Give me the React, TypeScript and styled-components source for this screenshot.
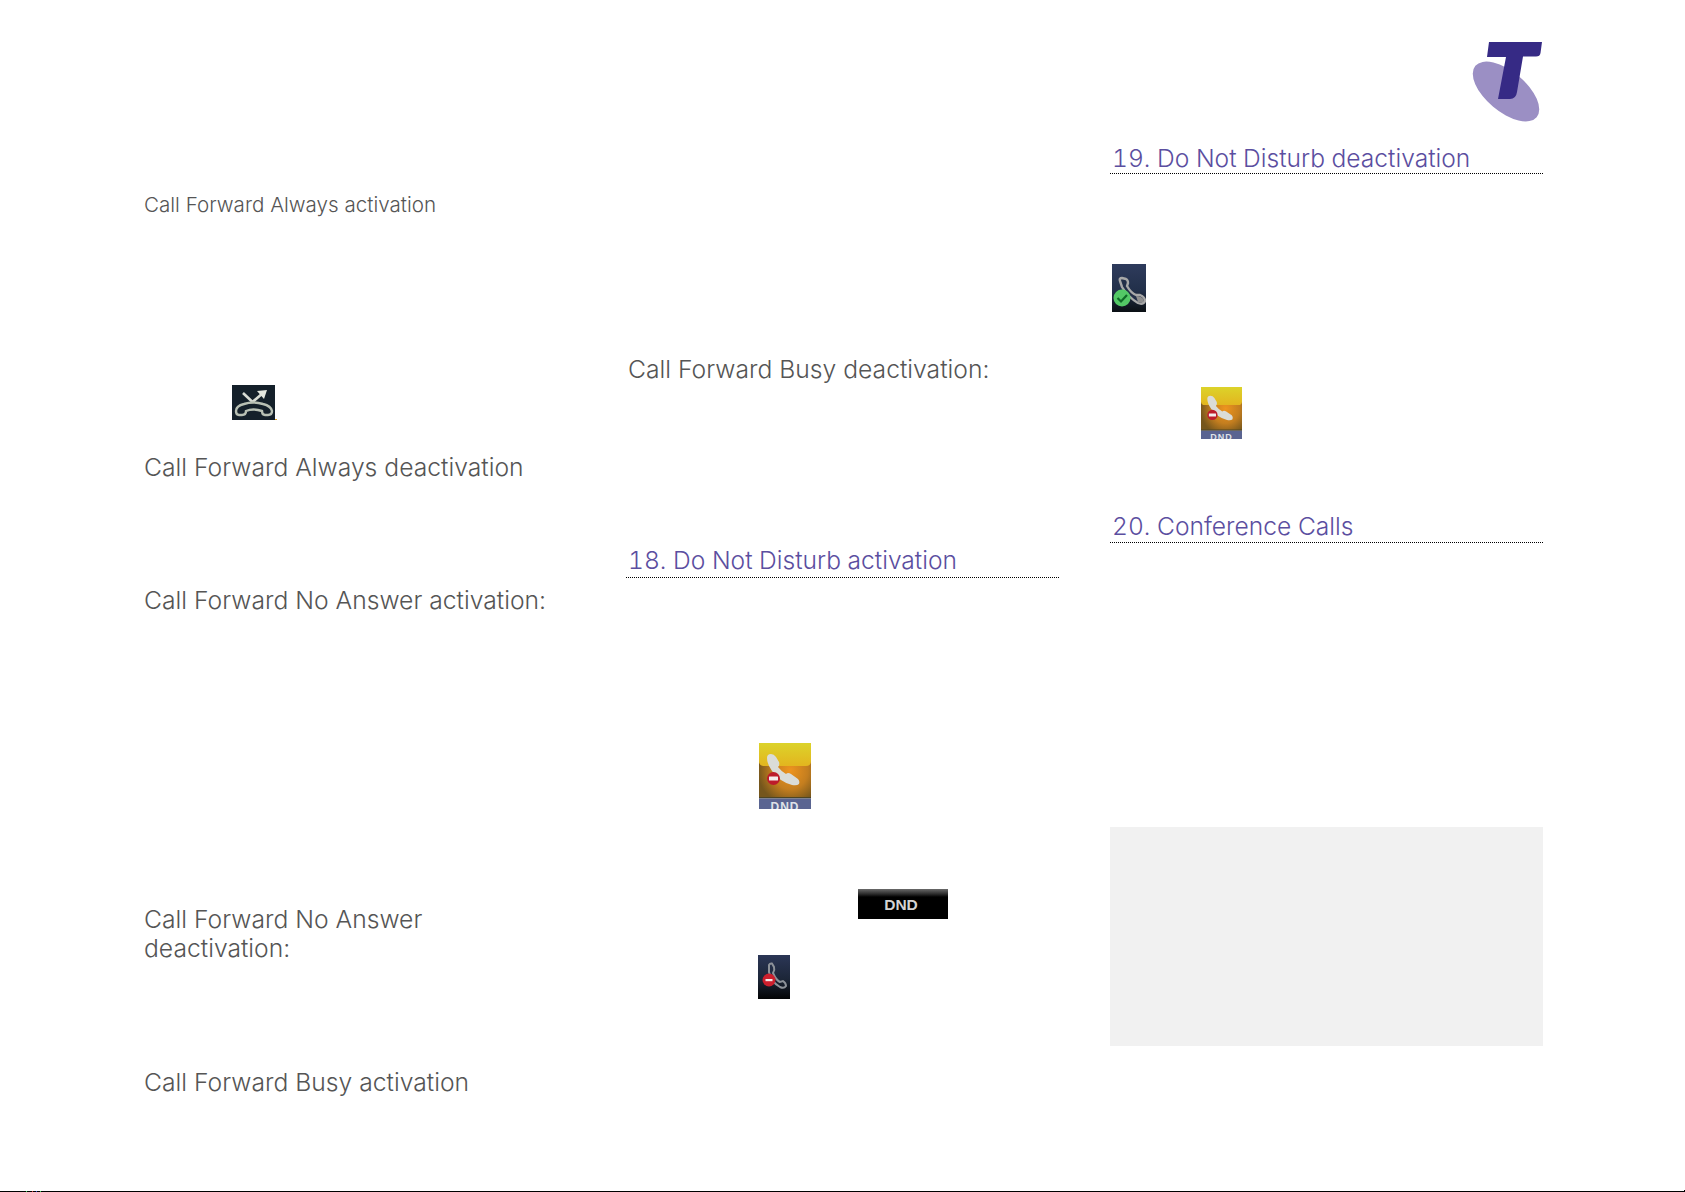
import styled, { createGlobalStyle } from 'styled-components';

const GlobalStyle = createGlobalStyle`
	html, body {
		margin: 0;
		padding: 0;
		background: #fff;
	}
`;

const Page = styled.div`
	display: grid;
	grid-template-columns: 482px 484px 433px;
	height: 1191px;
	padding-left: 144px;
	overflow: hidden;
	font-family: Inter, 'Liberation Sans', sans-serif;
`;
const Column = styled.section<{ $top?: number }>`
	display: flex;
	flex-direction: column;
	width: 433px;
	padding-top: ${(props) => props.$top ?? 0}px;
`;
const SmallLabel = styled.p<{ $gap: number }>`
	margin: ${(props) => props.$gap}px 0 0;
	font-size: 20.6px;
	font-weight: 300;
	line-height: 24px;
	color: #555;
`;
const SubHeading = styled.h3<{ $gap: number; $indent?: number }>`
	margin: ${(props) => props.$gap}px 0 0 ${(props) => props.$indent ?? 0}px;
	font-size: 24.7px;
	font-weight: 300;
	line-height: 29px;
	white-space: nowrap;
	color: #555;
`;
const Heading = styled.h2<{ $gap: number; $pad: number }>`
	margin: ${(props) => props.$gap}px 0 0;
	padding: 0 2px ${(props) => props.$pad}px;
	border-bottom: 1px dotted #000;
	font-size: 24.6px;
	font-weight: 300;
	font-variant-numeric: tabular-nums;
	line-height: 30px;
	color: #5b4ea0;
`;
const LogoMark = styled.svg`
	align-self: flex-end;
	display: block;
	width: 70px;
	height: 79px;
	overflow: visible;
`;
const IconTile = styled.div<{ $gap: number; $left: number; $width: number; $height: number }>`
	position: relative;
	overflow: hidden;
	flex: none;
	width: ${(props) => props.$width}px;
	height: ${(props) => props.$height}px;
	margin: ${(props) => props.$gap}px 0 0 ${(props) => props.$left}px;
	svg {
		display: block;
		width: 100%;
		height: 100%;
	}
`;
const DndCaption = styled.span<{ $size: number }>`
	position: absolute;
	left: 0;
	right: 0;
	bottom: ${(props) => Math.round(props.$size * -0.42)}px;
	text-align: center;
	font-family: 'Liberation Sans', sans-serif;
	font-size: ${(props) => props.$size}px;
	font-weight: 700;
	letter-spacing: 1px;
	line-height: 1.2;
	color: #dfe2e8;
`;
const DndButton = styled.div<{ $gap: number; $left: number }>`
	display: flex;
	align-items: center;
	justify-content: center;
	width: 90px;
	height: 30px;
	margin: ${(props) => props.$gap}px 0 0 ${(props) => props.$left}px;
	padding: 2px 4px 0 0;
	box-sizing: border-box;
	background: linear-gradient(#6a6a6a 0, #2c2c2c 5px, #000 8px);
	font-family: 'Liberation Sans', sans-serif;
	font-size: 15.5px;
	font-weight: 700;
	color: #d4d4d4;
`;
const NoteBox = styled.div<{ $gap: number }>`
	height: 219px;
	margin-top: ${(props) => props.$gap}px;
	background: #f1f1f1;
`;
const BottomRule = styled.div`
	position: relative;
	height: 1px;
	background: linear-gradient(
		to right,
		#000 26px,
		#3bd45a 26px 27px,
		#000 27px 32px,
		#d43b3b 32px 33px,
		#000 33px 36px,
		#3b4bd4 36px 37px,
		#000 37px 40px,
		#3bd45a 40px 41px,
		#000 41px
	);
	&::after {
		content: '';
		position: absolute;
		right: 0;
		bottom: 0;
		width: 1px;
		height: 2px;
		background: #000;
	}
`;

function TelstraLogo() {
	return (
		<LogoMark viewBox='0 0 70 79'>
			<ellipse cx='33' cy='49.5' rx='40' ry='20' transform='rotate(40 33 49.5)' fill='#9b8fc4' />
			<path d='M16 0H69L67.500 11Q67 14.500 63 14.500H50L44 50Q43 57 37 57H25L33 15H14Z' fill='#362a85' />
		</LogoMark>
	);
}

function DndTile(props: { gap: number; left: number; width: number; height: number; caption: number }) {
	const { gap, left, width, height, caption } = props;
	const id = `dnd-${width}`;
	return (
		<IconTile $gap={gap} $left={left} $width={width} $height={height}>
			<svg viewBox='0 0 52 66' preserveAspectRatio='none'>
				<defs>
					<radialGradient id={`${id}-body`} cx='0.6' cy='0.5' r='0.62'>
						<stop offset='0' stopColor='#ee941e' />
						<stop offset='0.55' stopColor='#c47e1f' />
						<stop offset='1' stopColor='#75561c' />
					</radialGradient>
					<linearGradient id={`${id}-top`} x1='0' y1='0' x2='0' y2='1'>
						<stop offset='0' stopColor='#dcd32a' />
						<stop offset='1' stopColor='#e3b51f' />
					</linearGradient>
				</defs>
				<rect width='52' height='55' fill={`url(#${id}-body)`} />
				<rect y='54' width='52' height='1.500' fill='#4c4526' />
				<path d='M0 0H52V18Q52 23 47 23H5Q0 23 0 18Z' fill={`url(#${id}-top)`} />
				<rect y='55.500' width='52' height='10.500' fill='#5a6491' />
				<path
					d='M8 15Q8 11 12 11Q15 11 17 14L20 19Q21 22 19 24Q23 29 27 31Q29 29 32 31L39 36Q41 38 40 41Q38 43 33 42Q21 39 13 28Q8 21 8 15Z'
					fill='#dadcd8'
				/>
				<circle cx='14.500' cy='35.500' r='6.500' fill='#bd1c2b' />
				<rect x='10' y='33.500' width='9' height='4' rx='0.500' fill='#f4ecec' />
			</svg>
			<DndCaption $size={caption}>DND</DndCaption>
		</IconTile>
	);
}

function CheckPhoneIcon() {
	return (
		<IconTile $gap={90} $left={2} $width={34} $height={48}>
			<svg viewBox='0 0 34 48'>
				<defs>
					<linearGradient id='check-bg' x1='0' y1='0' x2='0' y2='1'>
						<stop offset='0' stopColor='#2e3b5c' />
						<stop offset='0.55' stopColor='#22304a' />
						<stop offset='1' stopColor='#0b0f14' />
					</linearGradient>
				</defs>
				<rect width='34' height='48' fill='url(#check-bg)' />
				<path
					d='M8 17Q7 14 10 14L14 15Q16 16 16 19L15 22Q19 29 24 31L28 31Q33 33 33 37Q31 41 26 39Q16 33 10 23Z'
					fill='#232f48'
					stroke='#a8a8a8'
					strokeWidth='2.400'
				/>
				<path d='M24 32Q30 32 32 36Q31 40 26 38Z' fill='#8f8f8f' />
				<circle cx='10' cy='34' r='8.500' fill='#53c866' />
				<path d='M5.500 34L9 37.500L15 31' fill='none' stroke='#0f6b27' strokeWidth='2.200' />
			</svg>
		</IconTile>
	);
}

function ForwardIcon() {
	return (
		<IconTile $gap={168} $left={88} $width={45} $height={35}>
			<svg viewBox='0 0 45 35'>
				<rect width='43' height='35' fill='#14202a' />
				<rect x='43' y='34' width='2' height='1' fill='#e0a020' />
				<path d='M11 8L20.500 17L31 8' fill='none' stroke='#d8dcd4' strokeWidth='2.600' />
				<path d='M25 6L35 5L32 14Z' fill='#e4e8e0' />
				<path
					d='M4 26Q4 21 12 19Q21 16 31 19Q39 21 40 26Q40 30 36 30H33Q30 30 30 26Q21 23 14 26Q14 30 10 30H7Q4 30 4 26Z'
					fill='#14202a'
					stroke='#b8c0b4'
					strokeWidth='2.400'
				/>
			</svg>
		</IconTile>
	);
}

function BlockedPhoneIcon() {
	return (
		<IconTile $gap={36} $left={132} $width={32} $height={44}>
			<svg viewBox='0 0 32 44'>
				<defs>
					<linearGradient id='blocked-bg' x1='0' y1='0' x2='0' y2='1'>
						<stop offset='0' stopColor='#2b3656' />
						<stop offset='0.55' stopColor='#1c2638' />
						<stop offset='1' stopColor='#030405' />
					</linearGradient>
				</defs>
				<rect width='32' height='44' fill='url(#blocked-bg)' />
				<path
					d='M11 10Q12 8 14 8.500L16 12Q17 15 15 18Q18 25 22 27L25 26Q28 28 28 31Q26 34 22 32Q13 27 11 17Z'
					fill='none'
					stroke='#8d9299'
					strokeWidth='2'
				/>
				<circle cx='11' cy='25' r='6.500' fill='#cc1f2d' />
				<rect x='7.500' y='24' width='7' height='2.200' fill='#f4ecec' />
			</svg>
		</IconTile>
	);
}

function App() {
	return (
		<>
			<GlobalStyle />
			<Page>
				<Column>
					<SmallLabel $gap={193}>Call Forward Always activation</SmallLabel>
					<ForwardIcon />
					<SubHeading $gap={33}>Call Forward Always deactivation</SubHeading>
					<SubHeading $gap={104}>Call Forward No Answer activation:</SubHeading>
					<SubHeading $gap={290}>
						Call Forward No Answer
						<br />
						deactivation:
					</SubHeading>
					<SubHeading $gap={105}>Call Forward Busy activation</SubHeading>
				</Column>
				<Column>
					<SubHeading $gap={355} $indent={2}>Call Forward Busy deactivation:</SubHeading>
					<Heading $gap={161} $pad={2}>18. Do Not Disturb activation</Heading>
					<DndTile gap={165} left={133} width={52} height={66} caption={12} />
					<DndButton $gap={80} $left={232}>DND</DndButton>
					<BlockedPhoneIcon />
				</Column>
				<Column $top={42}>
					<TelstraLogo />
					<Heading $gap={22} $pad={0}>19. Do Not Disturb deactivation</Heading>
					<CheckPhoneIcon />
					<DndTile gap={75} left={91} width={41} height={52} caption={9} />
					<Heading $gap={72} $pad={1}>20. Conference Calls</Heading>
					<NoteBox $gap={284} />
				</Column>
			</Page>
			<BottomRule />
		</>
	);
}

export default App;
